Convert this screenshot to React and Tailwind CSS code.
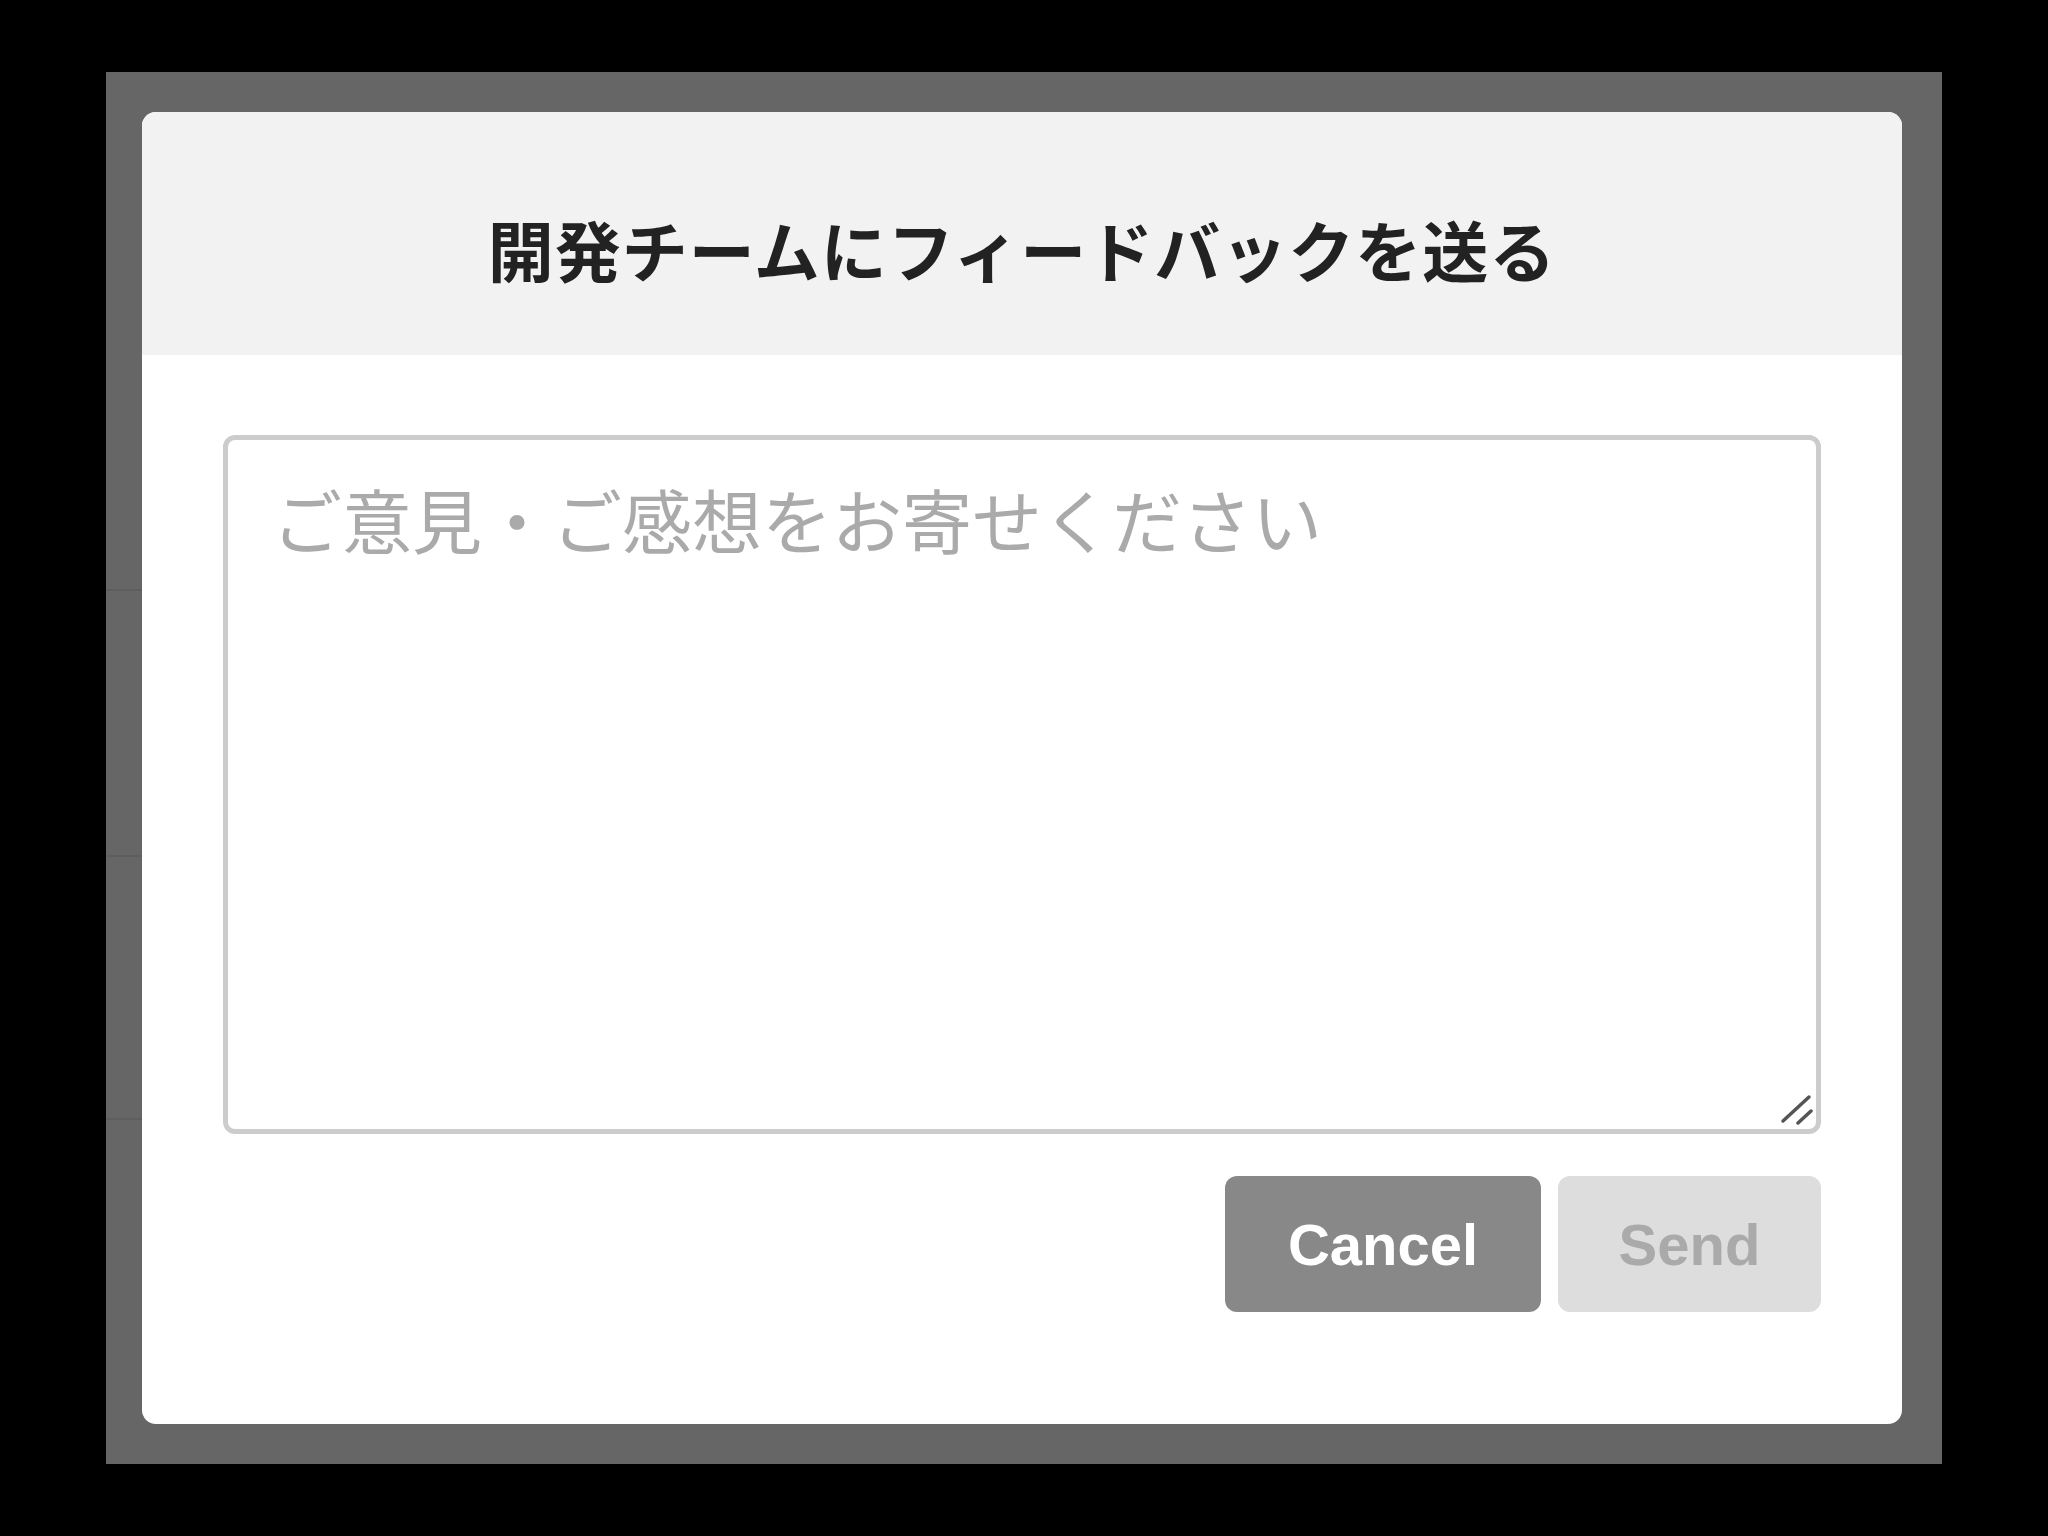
import React, { useState } from "react";

const jp = { fontFamily: '"Noto Sans CJK JP", "Noto Sans", sans-serif' };
const latin = { fontFamily: '"Liberation Sans", Arial, sans-serif' };

const ResizeGrip = () => (
  <svg
    className="pointer-events-none absolute right-[8px] bottom-[8px]"
    width="40"
    height="40"
    viewBox="0 0 40 40"
  >
    <line x1="10" y1="35" x2="36" y2="11" stroke="#555555" strokeWidth="3.5" strokeLinecap="round" />
    <line x1="25" y1="37" x2="38" y2="25" stroke="#555555" strokeWidth="3.5" strokeLinecap="round" />
  </svg>
);

const App = () => {
  const [text, setText] = useState("");

  return (
    <div className="w-[2048px] h-[1536px] bg-black pl-[106px] pt-[72px]">
      <div className="flex w-[1836px] h-[1392px] bg-[#666666] pt-[40px] pb-[40px] pr-[40px]">
        {/* page content behind the overlay, only a sliver shows */}
        <div className="w-[36px] flex flex-col">
          <div className="h-[479px] border-b-2 border-[#5e5e5e]"></div>
          <div className="h-[266px] border-b-2 border-[#5e5e5e]"></div>
          <div className="h-[263px] border-b-2 border-[#5e5e5e]"></div>
        </div>

        <div className="flex-1 flex flex-col bg-white rounded-[14px] overflow-hidden">
          <div className="h-[243px] shrink-0 bg-[#f2f2f2] flex items-center justify-center pt-[28px]">
            <h1
              className="text-[66px] leading-none font-bold tracking-[1px] text-[#222222]"
              style={jp}
            >
              開発チームにフィードバックを送る
            </h1>
          </div>

          <div className="px-[81px] pt-[80px] pb-[112px] flex flex-col">
            <div className="relative h-[699px]">
              <textarea
                value={text}
                onChange={(e) => setText(e.target.value)}
                placeholder="ご意見・ご感想をお寄せください"
                className="w-full h-full resize-none border-[5px] border-[#cccccc] rounded-[12px] px-[44px] pt-[33px] text-[70px] leading-[1.3] text-[#333333] placeholder:text-[#aaaaaa] outline-none"
                style={jp}
              />
              <ResizeGrip />
            </div>

            <div className="flex justify-end gap-[17px] mt-[42px]">
              <button
                className="w-[316px] h-[136px] rounded-[12px] bg-[#888888] text-white text-[58px] font-bold"
                style={latin}
              >
                Cancel
              </button>
              <button
                disabled
                className="w-[263px] h-[136px] rounded-[12px] bg-[#dddddd] text-[#aaaaaa] text-[58px] font-bold"
                style={latin}
              >
                Send
              </button>
            </div>
          </div>
        </div>
      </div>
    </div>
  );
};

export default App;
